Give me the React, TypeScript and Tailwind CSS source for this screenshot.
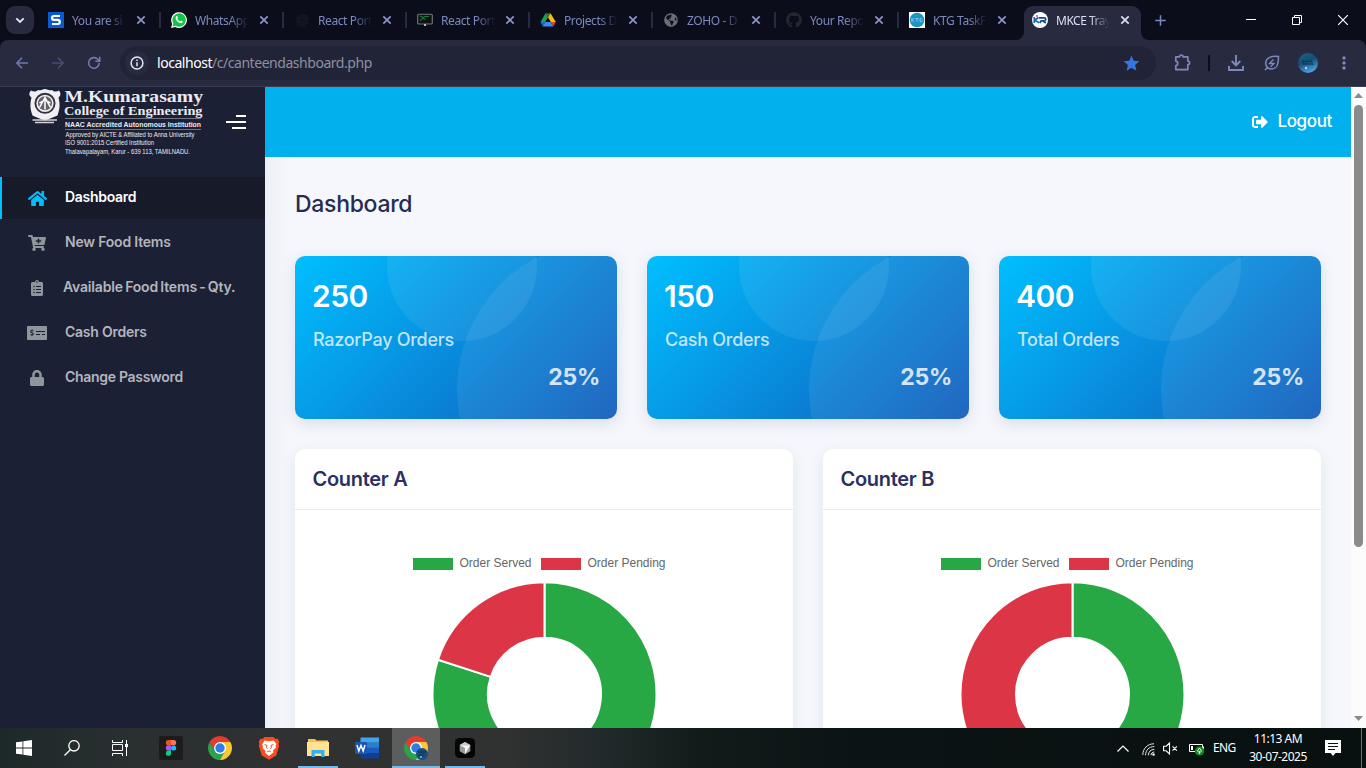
import React from "react";
import {
  FaHome,
  FaCartPlus,
  FaClipboardList,
  FaMoneyCheckAlt,
  FaLock,
  FaSignOutAlt,
  FaGithub,
  FaGlobeAmericas,
} from "react-icons/fa";
import { MdStar, MdMoreVert } from "react-icons/md";
import { RiOpenaiFill } from "react-icons/ri";

/* ---------- Favicons ---------- */

function SIcon() {
  return (
    <svg width="16" height="16" viewBox="0 0 16 16">
      <rect width="16" height="16" fill="#0a5bd0" />
      <path d="M12 4H6.2C4.8 4 4 4.8 4 5.9s.8 1.9 2 1.9h3.8c1.2 0 2 .8 2 2S11 12 9.8 12H4" fill="none" stroke="#fff" strokeWidth="2.2" />
    </svg>
  );
}

function WhatsIcon() {
  return (
    <svg width="16" height="16" viewBox="0 0 16 16">
      <path d="M0 16l1.1-4.1A7.9 7.9 0 1 1 4.2 15z" fill="#fff" />
      <path d="M1.5 14.5l.9-3A6.7 6.7 0 1 1 4.6 13.7z" fill="#13c34a" />
      <path d="M5.3 4.2c.5-.4.9-.2 1.1.3l.5 1.1c.1.4-.6.9-.6 1.1.5 1.200 1.600 2.200 2.800 2.600.3 0 .8-.9 1.100-.8l1.400.7c.5.3 0 1.500-.9 1.800-2.200.700-5.900-2.300-6.100-4.800 0-.9.300-1.600.7-2z" fill="#fff" />
    </svg>
  );
}

function MonitorIcon() {
  return (
    <svg width="16" height="16" viewBox="0 0 16 16">
      <rect x="0.7" y="2.200" width="14.600" height="9.800" rx="1" fill="#101312" stroke="#777" strokeWidth="1.100" />
      <path d="M3 4l3 1.500L3 9M5 6.500l3-2h4M6 7h3" stroke="#1d7a3d" strokeWidth="1.100" fill="none" />
      <rect x="7" y="12" width="2" height="2" fill="#bbb" />
    </svg>
  );
}

function DriveIcon() {
  return (
    <svg width="16" height="16" viewBox="0 0 16 16">
      <path d="M5.500 1.200L0.500 10l2.300 3.800L8 5.200z" fill="#1ca24c" />
      <path d="M5.500 1.200h5L8 5.500z" fill="#188038" />
      <path d="M10.500 1.200L8 5.300 10.800 10h5z" fill="#fbbc04" />
      <path d="M5.200 10h5.600l2.600 4.500H2.700z" fill="#4285f4" />
      <path d="M10.800 10h4.900l-2.400 4.300z" fill="#ea4335" />
      <path d="M5.200 10H.5l2.400 4.200z" fill="#1967d2" />
    </svg>
  );
}

function KtgIcon() {
  return (
    <svg width="16" height="16" viewBox="0 0 16 16">
      <rect width="16" height="16" fill="#fff" />
      <circle cx="8" cy="8" r="7.300" fill="#1f93c4" />
      <path d="M2.800 6.200v3.600M5.300 6.200L3.200 8l2.100 1.800M6.200 6.600h3.600M8 6.600v3.200M13.200 6.800h-2.200v2.800h2.200v-1.300" fill="none" stroke="#8fd6ee" strokeWidth="0.800" />
    </svg>
  );
}

function KrIcon() {
  return (
    <svg width="16" height="16" viewBox="0 0 16 16">
      <circle cx="8" cy="8" r="8" fill="#fff" />
      <path d="M2.300 5v6M6.500 5.500L2.800 8.200l4.400 2.500" fill="none" stroke="#1a6db5" strokeWidth="1.800" />
      <path d="M7 5.900h5.300c1.900 0 1.900 3 0 3H9.200L7.800 11M11.200 9l2.600 2.200" fill="none" stroke="#1a4b86" strokeWidth="1.700" />
      <circle cx="5" cy="4" r="1" fill="#e0484a" />
    </svg>
  );
}

function Close({ color }: { color: string }) {
  return (
    <svg width="10" height="10" viewBox="0 0 10 10">
      <path d="M1.300 1.300l7.400 7.400M8.700 1.300L1.300 8.700" stroke={color} strokeWidth="1.700" />
    </svg>
  );
}

const tabs = [
  { title: "You are si", icon: <SIcon /> },
  { title: "WhatsApp", icon: <WhatsIcon /> },
  { title: "React Port", icon: <RiOpenaiFill size={15} color="#1c1e26" /> },
  { title: "React Port", icon: <MonitorIcon /> },
  { title: "Projects D", icon: <DriveIcon /> },
  { title: "ZOHO - D", icon: <FaGlobeAmericas size={14} color="#6b6e73" /> },
  { title: "Your Repo", icon: <FaGithub size={16} color="#24292e" /> },
  { title: "KTG TaskF", icon: <KtgIcon /> },
];

const fade = "[mask-image:linear-gradient(to_right,#000_65%,transparent_100%)]";

function TabStrip() {
  return (
    <div className="flex h-10 bg-[#0b0d1b]">
      <div className="w-[37px] shrink-0 pl-1.5 pt-1.5">
        <div className="flex size-7 items-center justify-center rounded-[9px] bg-[#282b40]">
          <svg width="10" height="7" viewBox="0 0 10 7">
            <path d="M1.300 1.300L5 5l3.700-3.700" fill="none" stroke="#e3e5f5" strokeWidth="1.900" />
          </svg>
        </div>
      </div>
      {tabs.map((t, i) => (
        <div key={i} className="flex w-[123px] shrink-0 items-center pl-[11px]">
          <div className="flex size-4 shrink-0 items-center justify-center">{t.icon}</div>
          <div className={`ml-2 mt-px w-[54px] whitespace-nowrap text-[12px] tracking-[-0.4px] text-[#7f88bd] ${fade}`}>{t.title}</div>
          <div className="ml-[10px] flex">
            <Close color="#8d95c8" />
          </div>
          {i < 7 && <div className="-mr-px ml-auto h-4 w-0.5 bg-[#282b40]" />}
        </div>
      ))}
      <div className="flex w-[123px] shrink-0 flex-col justify-end">
        <div className="flex h-[34px] items-end">
          <svg width="8" height="8" viewBox="0 0 8 8" className="-ml-[5px] shrink-0">
            <path d="M8 0v8H0a8 8 0 0 0 8-8z" fill="#282b40" />
          </svg>
          <div className="flex h-[34px] w-[117px] shrink-0 items-center rounded-t-[9px] bg-[#282b40] pb-1.5 pl-2">
            <KrIcon />
            <div className={`ml-2 mt-px w-[53px] whitespace-nowrap text-[12px] tracking-[-0.5px] text-[#dcdffa] ${fade}`}>MKCE Tray</div>
            <div className="ml-[11px] flex">
              <Close color="#dcdffa" />
            </div>
          </div>
          <svg width="8" height="8" viewBox="0 0 8 8" className="shrink-0">
            <path d="M0 0v8h8a8 8 0 0 1-8-8z" fill="#282b40" />
          </svg>
        </div>
      </div>
      <div className="flex items-center pl-[11px]">
        <svg width="11" height="11" viewBox="0 0 11 11">
          <path d="M5.500 0.300v10.400M.3 5.500h10.400" stroke="#7f88bd" strokeWidth="1.500" />
        </svg>
      </div>
      <div className="ml-auto flex items-center gap-9 pr-[18px]">
        <svg width="10" height="10" viewBox="0 0 10 10">
          <path d="M0 4.500h10" stroke="#fff" />
        </svg>
        <svg width="10" height="10" viewBox="0 0 10 10" fill="none" stroke="#fff">
          <path d="M.5 2.500h7v7h-7zM2.500 2.500v-2h7v7h-2" />
        </svg>
        <svg width="10" height="10" viewBox="0 0 10 10">
          <path d="M0 0l10 10M10 0L0 10" stroke="#fff" strokeWidth="1.200" />
        </svg>
      </div>
    </div>
  );
}

function Toolbar() {
  return (
    <div className="bg-[#0b0d1b]">
      <div className="flex h-[47px] items-center rounded-t-lg border-b border-[#3b3e57] bg-[#282b40] pl-4">
        <svg width="12" height="12" viewBox="0 0 12 12" fill="none" stroke="#7079b0" strokeWidth="1.600">
          <path d="M12 6H1M6 .8L.9 6 6 11.200" />
        </svg>
        <svg width="12" height="12" viewBox="0 0 12 12" fill="none" stroke="#474c70" strokeWidth="1.600" className="ml-6">
          <path d="M0 6h11M6 .8L11.100 6 6 11.200" />
        </svg>
        <svg width="14" height="14" viewBox="0 0 14 14" fill="none" stroke="#7079b0" strokeWidth="1.600" className="ml-[23px]">
          <path d="M12.200 7A5.300 5.300 0 1 1 10.800 3.300L12.500 5M12.700 .8v4.400H8.300" />
        </svg>
        <div className="ml-[19px] flex h-[34px] w-[1036px] items-center rounded-full bg-[#212437] pl-[5px]">
          <div className="flex size-6 items-center justify-center rounded-full bg-[#282b40]">
            <svg width="14" height="14" viewBox="0 0 14 14" fill="none" stroke="#e3e5f5" strokeWidth="1.500">
              <circle cx="7" cy="7" r="5.900" />
              <path d="M7 6.300v4M7 3.600v1.500" />
            </svg>
          </div>
          <div className="ml-2 whitespace-nowrap pb-px text-[14px] tracking-[-0.46px] text-[#8d8f9f]">
            <span className="text-white">localhost</span>/c/canteendashboard.php
          </div>
          <MdStar size={19} color="#3574e2" className="ml-auto mr-[15px]" />
        </div>
        <svg width="17" height="17" viewBox="0 0 17 17" fill="none" stroke="#7f88bd" strokeWidth="1.700" className="-mt-px ml-[18px]">
          <path d="M1.800 2.800H5.600C5.600.4 9 .4 9 2.800h4.800V7c2.400 0 2.400 3.600 0 3.600v5H1.800v-4c2.600-.4 2.600-4 0-4.400z" strokeLinejoin="round" />
        </svg>
        <div className="ml-[17px] h-4 w-0.5 bg-[#0b0d1b]" />
        <svg width="16" height="16" viewBox="0 0 16 16" fill="none" stroke="#7f88bd" strokeWidth="1.900" className="ml-[18px]">
          <path d="M8 0v10M3.700 6L8 10.300 12.300 6M1 11v4h14v-4" />
        </svg>
        <svg width="16" height="16" viewBox="0 0 16 16" fill="none" stroke="#7f88bd" strokeWidth="1.500" className="ml-5">
          <path d="M14.500 1.500C8 .8 1.700 2.300 1.700 8.300c0 8 11 7 12.100.2.500-2.700.7-5 .7-7zM3.500 12.500L1 15" />
          <path d="M9.500 4.500L5.500 8.500h4.500L6.500 12" strokeWidth="1.300" />
        </svg>
        <svg width="20" height="20" viewBox="0 0 20 20" className="ml-[18px]">
          <defs>
            <linearGradient id="avatar" x1="0" y1="0" x2="0.4" y2="1">
              <stop offset="0" stopColor="#126b94" />
              <stop offset="0.500" stopColor="#164c72" />
              <stop offset="1" stopColor="#4a9bdc" />
            </linearGradient>
          </defs>
          <circle cx="10" cy="10" r="10" fill="url(#avatar)" />
          <path d="M4 8.500h11M5 11h11" stroke="#0e3049" strokeWidth="1.400" strokeDasharray="2 .7" />
          <circle cx="8" cy="15" r="1.200" fill="#a9d4f5" />
        </svg>
        <MdMoreVert size={20} color="#7f88bd" className="ml-4" />
      </div>
    </div>
  );
}

/* ---------- Sidebar ---------- */

function CollegeLogo() {
  return (
    <svg width="176" height="70" viewBox="28 87 176 70" className="shrink-0">
      <path d="M31 90.500c3 2 5 1 7-.5 4 1 4-1 7-1s3 2 7 1c2 1.500 4 2.500 7 .5 2 3 2 5-.5 7 2 8 1 12-1 18-4 2-8 3-12.500 5-5-2-9-3-12.500-5-2-6-3-10-1-18-2.500-2-3-4-.5-7z" fill="#f1eff2" />
      <circle cx="45" cy="103.300" r="9.600" fill="none" stroke="#332f40" strokeWidth="1.900" />
      <circle cx="45" cy="103.300" r="7" fill="#66616d" />
      <path d="M39.500 107.500l5.500-10 5.500 10M45 96.500v13M39.500 103l4-2M50.500 103l-4-2" stroke="#fff" strokeWidth="1.500" fill="none" />
      <path d="M32.500 120h24.500M35 122.500h19" stroke="#d6d4da" strokeWidth="1.700" />
      <g fill="#eceaf0">
        <g fontFamily="'Liberation Serif',serif" fontWeight="bold">
          <text x="64.500" y="102" fontSize="17.500" textLength="138.500" lengthAdjust="spacingAndGlyphs">M.Kumarasamy</text>
          <text x="64" y="114.800" fontSize="13.500" textLength="138.500" lengthAdjust="spacingAndGlyphs">College of Engineering</text>
        </g>
        <path d="M65 118.500h136M65 129.500h136" stroke="#8a8896" strokeWidth="0.800" />
        <g fontFamily="'Liberation Sans',sans-serif">
          <text x="65" y="126.600" fontSize="6.500" fontWeight="bold" textLength="136" lengthAdjust="spacingAndGlyphs">NAAC Accredited Autonomous Institution</text>
          <text x="65.500" y="137" fontSize="6.500" textLength="129" lengthAdjust="spacingAndGlyphs">Approved by AICTE &amp; Affiliated to Anna University</text>
          <text x="65" y="145.300" fontSize="6.500" textLength="89" lengthAdjust="spacingAndGlyphs">ISO 9001:2015 Certified Institution</text>
          <text x="65" y="153.800" fontSize="6.500" textLength="125" lengthAdjust="spacingAndGlyphs">Thalavapalayam, Karur - 639 113, TAMILNADU.</text>
        </g>
      </g>
    </svg>
  );
}

const navItems = [
  { label: "New Food Items", icon: <FaCartPlus size={18} />, cls: "pl-2 tracking-[-0.2px]" },
  { label: "Available Food Items - Qty.", icon: <FaClipboardList size={16} />, cls: "pl-1.5 tracking-[-0.17px] [word-spacing:-1.1px]" },
  { label: "Cash Orders", icon: <FaMoneyCheckAlt size={20} />, cls: "pl-2 tracking-[-0.25px]" },
  { label: "Change Password", icon: <FaLock size={16} />, cls: "pl-2 tracking-[-0.3px]" },
];

function Sidebar() {
  return (
    <aside className="flex h-full w-[265px] shrink-0 flex-col bg-[#1c2035]">
      <div className="flex h-[90px] shrink-0 items-start pl-7">
        <CollegeLogo />
        <svg width="20" height="14" viewBox="0 0 20 14" className="ml-[22px] mt-7" fill="#fff">
          <rect x="10" y="0" width="10" height="2" />
          <rect x="0" y="6" width="20" height="2" />
          <rect x="6" y="12" width="14" height="2" />
        </svg>
      </div>
      <nav className="flex flex-col gap-[3px] font-['Inter',sans-serif] text-[14px] font-semibold text-[#b4b5bb]">
        <div className="flex h-[42px] items-center border-l-2 border-[#00bfff] bg-[#161a29] text-white">
          <div className="flex w-[55px] justify-end text-[#00bfff]">
            <div className="mr-[10px]"><FaHome size={19} /></div>
          </div>
          <span className="pb-[3px] pl-2 tracking-[-0.3px]">Dashboard</span>
        </div>
        {navItems.map((n) => (
          <div key={n.label} className="flex h-[42px] items-center">
            <div className="flex w-[57px] shrink-0 items-center pl-[17px] text-[#8e959b]">
              <div className="flex w-10 justify-center">{n.icon}</div>
            </div>
            <span className={`whitespace-nowrap pb-[3px] ${n.cls}`}>{n.label}</span>
          </div>
        ))}
      </nav>
    </aside>
  );
}

/* ---------- Content ---------- */

function StatCard({ value, label }: { value: string; label: string }) {
  return (
    <div className="relative h-[163px] overflow-hidden rounded-[10px] bg-[linear-gradient(135deg,#00bfff_0%,#105bbb_100%)] px-[17px] pt-[17px] font-['Inter',sans-serif] text-white">
      <div className="absolute -top-[65px] left-[92px] size-[150px] rounded-full bg-white/[0.07]" />
      <div className="absolute -top-[16px] left-[162px] size-[300px] rounded-full bg-white/[0.07]" />
      <div className="relative text-[30px] font-semibold leading-[46px] tracking-[-0.5px]">{value}</div>
      <div className="relative mt-[6px] pl-px text-[18px] font-medium leading-[30px] tracking-[-0.28px] text-white/75">{label}</div>
      <div className="relative mt-[6px] text-right text-[23px] font-bold leading-[32px] tracking-[-0.3px] text-white/80">25%</div>
    </div>
  );
}

function slice(from: number, to: number) {
  const p = (r: number, a: number) => `${112 + r * Math.sin(a * 2 * Math.PI)} ${112 - r * Math.cos(a * 2 * Math.PI)}`;
  const large = to - from > 0.5 ? 1 : 0;
  return `M${p(112, from)}A112 112 0 ${large} 1 ${p(112, to)}L${p(56.500, to)}A56.5 56.5 0 ${large} 0 ${p(56.500, from)}Z`;
}

function CounterCard({ title, served }: { title: string; served: number }) {
  return (
    <div className="h-[420px] rounded-[10px] bg-white shadow-[0_4px_16px_rgba(40,50,90,0.09)]">
      <div className="flex h-[61px] items-center border-b border-[#e9eaed] px-[17.500px] font-['Inter',sans-serif] text-[20px] font-semibold tracking-[-0.3px] text-[#2b3060]">{title}</div>
      <div className="flex flex-col items-center pt-[46px] font-['Liberation_Sans',Arial,sans-serif] text-[12px] leading-3 text-[#666]">
        <div className="mr-[9.500px] flex items-center">
          <div className="mt-0.5 h-3 w-10 bg-[#28a745]" />
          <span className="ml-[6.500px] w-[72px] whitespace-nowrap">Order Served</span>
          <div className="ml-[9.500px] mt-0.5 h-3 w-10 bg-[#dc3545]" />
          <span className="ml-[6.500px] w-[78px] whitespace-nowrap">Order Pending</span>
        </div>
        <svg width="224" height="224" viewBox="0 0 224 224" className="mt-3 overflow-visible">
          <g transform="translate(0.5 0.3)" stroke="#fff" strokeWidth="2">
            <path d={slice(0, served)} fill="#28a745" />
            <path d={slice(served, 1)} fill="#dc3545" />
          </g>
        </svg>
      </div>
    </div>
  );
}

function Content() {
  return (
    <div className="flex min-w-0 flex-1 flex-col bg-[#f5f7fc]">
      <header className="flex h-[70px] shrink-0 items-center justify-end bg-[#02b0ed] pr-[19px] font-['Inter',sans-serif] text-[17px] font-medium tracking-[-0.35px] text-white">
        <FaSignOutAlt size={16} className="mr-[9px]" />
        <span>Logout</span>
      </header>
      <main className="bg-[linear-gradient(to_right,#edf0f7_0,#f5f7fc_26px)] px-[30px] pt-[29px]">
        <h1 className="h-[70px] font-['Inter',sans-serif] text-[23px] font-medium leading-9 tracking-[-0.3px] text-[#262b52]">Dashboard</h1>
        <div className="grid grid-cols-3 gap-[30px]">
          {[["250", "RazorPay Orders"], ["150", "Cash Orders"], ["400", "Total Orders"]].map(([v, l]) => (
            <div key={l} className="rounded-[10px] shadow-[0_4px_16px_rgba(40,50,90,0.13)]">
              <StatCard value={v} label={l} />
            </div>
          ))}
        </div>
        <div className="mt-[30px] grid grid-cols-2 gap-[30px]">
          <CounterCard title="Counter A" served={0.8} />
          <CounterCard title="Counter B" served={0.5} />
        </div>
      </main>
    </div>
  );
}

function Scrollbar() {
  return (
    <div className="flex w-[15px] shrink-0 flex-col items-center bg-[#fcfcfc]">
      <svg width="9" height="5" viewBox="0 0 9 5" className="mt-1.5"><path d="M0 5L4.500 0 9 5z" fill="#8b8b8b" /></svg>
      <div className="mt-[7px] h-[442px] w-[9px] rounded-full bg-[#8b8b8b]" />
      <svg width="9" height="5" viewBox="0 0 9 5" className="mb-[7px] mt-auto"><path d="M0 0l4.500 5L9 0z" fill="#8b8b8b" /></svg>
    </div>
  );
}

/* ---------- Taskbar ---------- */

function Chrome({ badge }: { badge?: boolean }) {
  return (
    <svg width="24" height="24" viewBox="0 0 24 24">
      <path d="M12 12L22.390 6A12 12 0 0 1 12 24z" fill="#fcc934" />
      <path d="M12 6h10.390L17.200 15 12 24z" fill="#fcc934" />
      <path d="M1.610 6L6.800 15l5.200 3 5.200-3L12 24A12 12 0 0 1 1.610 6z" fill="#2ba24c" />
      <path d="M1.610 6A12 12 0 0 1 22.390 6H12a6 6 0 0 0-5.500 8.500z" fill="#e33b2e" />
      <circle cx="12" cy="12" r="6" fill="#fff" />
      <circle cx="12" cy="12" r="4.700" fill="#2f7de9" />
      {badge && (
        <>
          <circle cx="18" cy="18" r="6" fill="#174f7c" />
          <path d="M14 16h8M14.500 19h6" stroke="#0d3555" strokeWidth="1.200" />
          <circle cx="17" cy="21" r="1" fill="#7cc1ea" />
        </>
      )}
    </svg>
  );
}

const apps = [
  {
    icon: (
      <svg width="24" height="24" viewBox="0 0 24 24">
        <rect width="24" height="24" rx="2" fill="#1d1c1d" />
        <path d="M12 4H9.500a2.600 2.600 0 0 0 0 5.300H12z" fill="#f24e1e" />
        <path d="M12 4h2.500a2.600 2.600 0 0 1 0 5.300H12z" fill="#ff7262" />
        <path d="M12 9.300H9.500a2.600 2.600 0 0 0 0 5.300H12z" fill="#a259ff" />
        <circle cx="14.600" cy="12" r="2.600" fill="#1abcfe" />
        <path d="M12 14.600H9.500a2.600 2.600 0 1 0 2.500 2.600z" fill="#0acf83" />
      </svg>
    ),
    cls: "",
    line: "",
  },
  { icon: <Chrome />, cls: "", line: "" },
  {
    icon: (
      <svg width="22" height="24" viewBox="0 0 22 24">
        <path d="M6.500 1h9l2 2 2-.5L21.300 6l-.7 2 .6 2-3 9.500L11 23.800 3.800 19.500.8 10l.6-2-.7-2 1.800-3.500 2 .5z" fill="#fb4b20" />
        <path d="M6.500 4.500l4.500.8 4.500-.8 3 3.500-1 1.500.5 2-3 3 .5 1.700L11 20l-4-3.300.5-1.700-3-3 .5-2-1-1.500z" fill="#fff" />
        <path d="M6.500 8.500l2.500.9-.5 2.100 1 1.300M15.500 8.500l-2.500.9.5 2.100-1 1.300M9 16l2-1.100 2 1.100" fill="none" stroke="#fb4b20" strokeWidth="1" />
      </svg>
    ),
    cls: "",
    line: "",
  },
  {
    icon: (
      <svg width="22" height="20" viewBox="0 0 22 20">
        <path d="M1 1h7l1.500 1.500H21V18H1z" fill="#f3c54b" />
        <path d="M0 4h22v14H0z" fill="#ffe391" />
        <path d="M4.500 19v-7h13v7h-3.300v-3.500H7.800V19z" fill="#35b0ea" />
      </svg>
    ),
    cls: "",
    line: "w-10 bg-[#76b9ed]",
  },
  {
    icon: (
      <svg width="24" height="22" viewBox="0 0 24 22">
        <path d="M5.500 1.500A1 1 0 0 1 6.500.5H24v5.200H5.500z" fill="#41a5ee" />
        <path d="M5.500 5.700H24v5.200H5.500z" fill="#2b7cd3" />
        <path d="M5.500 10.900H24v5.200H5.500z" fill="#185abd" />
        <path d="M5.500 16.100H24v5.400H6.500a1 1 0 0 1-1-1z" fill="#103f91" />
        <rect x="0" y="5" width="12" height="12" rx="1" fill="#1856b5" />
        <path d="M2 8l1.800 6L6 8.500 8.200 14 10 8" fill="none" stroke="#fff" strokeWidth="1.500" />
      </svg>
    ),
    cls: "",
    line: "",
  },
  { icon: <Chrome badge />, cls: "bg-[#5b5d5e]", line: "w-12 bg-[#76b9ed]" },
  {
    icon: (
      <svg width="20" height="20" viewBox="0 0 20 20">
        <rect width="20" height="20" rx="4.500" fill="#050505" />
        <path d="M10 4l5.300 3v6.200L10 16.200l-5.300-3V7z" fill="#9a9a9a" />
        <path d="M4.700 7L10 4l5.300 3z" fill="#c9c9c9" />
        <path d="M5 7.200h10.300L10 16.200V10z" fill="#f5f5f5" />
      </svg>
    ),
    cls: "",
    line: "w-10 bg-[#76b9ed]",
  },
];

function Taskbar() {
  return (
    <div className="flex h-10 shrink-0 bg-[linear-gradient(to_right,#1d2929_0px,#2a2f30_130px,#303132_300px,#303131_510px,#222a2b_600px,#121b1a_700px,#0b1314_860px,#081010_1366px)]">
      <div className="flex w-12 items-center justify-center">
        <svg width="16" height="16" viewBox="0 0 16 16" fill="#fff">
          <path d="M0 2.300L6.500 1.400v6.100H0zM7.300 1.300L16 0v7.500H7.300zM0 8.400h6.500v6.200L0 13.700zM7.300 8.400H16V16l-8.700-1.200z" />
        </svg>
      </div>
      <div className="flex w-12 items-center justify-center">
        <svg width="16" height="16" viewBox="0 0 16 16" fill="none" stroke="#fff" strokeWidth="1.300">
          <circle cx="10" cy="5.800" r="5.200" />
          <path d="M6.300 9.700L.5 15.500" />
        </svg>
      </div>
      <div className="flex w-12 items-center justify-center">
        <svg width="16" height="16" viewBox="0 0 16 16" fill="none" stroke="#fff" strokeWidth="1">
          <path d="M.5 0v2.500h10V0M.5 4.500h10v6H.5zM.5 16v-2.500h10V16M14.500 0v16" />
          <rect x="13" y="4" width="3" height="3" fill="#fff" stroke="none" />
        </svg>
      </div>
      <div className="ml-[3px] flex gap-px">
        {apps.map((a, i) => (
          <div key={i} className={`flex w-12 flex-col items-center ${a.cls}`}>
            <div className="flex h-[38px] items-center pt-0.5">{a.icon}</div>
            <div className={`h-0.5 ${a.line}`} />
          </div>
        ))}
      </div>
      <div className="ml-auto flex items-center text-[12px] text-white">
        <svg width="12" height="7" viewBox="0 0 12 7" fill="none" stroke="#fff" strokeWidth="1.200"><path d="M.5 6.500L6 1l5.500 5.500" /></svg>
        <svg width="13" height="13" viewBox="0 0 13 13" fill="none" stroke="#e8e8e8" strokeWidth="1" className="ml-[13px] mt-0.5">
          <path d="M.8 12C.8 5.500 5.500.8 12 .8M3.600 12.300C3.600 7 7 3.600 12.300 3.600M6.400 12.300c0-3.600 2.300-5.900 5.900-5.900M9 12.300c0-2 1.300-3.300 3.300-3.300" />
          <circle cx="11.500" cy="11.500" r="1.300" fill="#fff" stroke="none" />
        </svg>
        <svg width="15" height="13" viewBox="0 0 15 13" fill="none" stroke="#fff" strokeWidth="1.100" className="ml-2">
          <path d="M.6 4.200h2.600L6.500 1v11L3.200 8.800H.6zM9.500 4.300l4.400 4.400M13.900 4.300L9.500 8.700" />
        </svg>
        <svg width="17" height="15" viewBox="0 0 17 15" className="ml-[10px]">
          <path d="M1.500 3.500h13v7h-13zM15.500 5.500v3" fill="none" stroke="#fff" strokeWidth="1" />
          <rect x="3" y="5" width="2" height="4" fill="#fff" />
          <circle cx="11.500" cy="10" r="4.700" fill="#118a1c" />
          <path d="M11.500 7l2 3-2 2-2-2zM11.500 10v3" stroke="#fff" strokeWidth="0.900" fill="none" />
        </svg>
        <span className="ml-[8px] w-[24px] tracking-[-0.6px]">ENG</span>
        <div className="ml-[10px] flex w-[62px] flex-col items-center whitespace-nowrap leading-[18px] tracking-[-0.5px]">
          <span>11:13 AM</span>
          <span>30-07-2025</span>
        </div>
        <svg width="16" height="16" viewBox="0 0 16 16" className="ml-4">
          <path d="M0 0h16v13h-5.500L8 16l-2.500-3H0z" fill="#fff" />
          <path d="M3 3.500h10M3 6.500h10M3 9.500h7" stroke="#0a1213" />
        </svg>
        <div className="ml-5 h-10 w-px bg-[#6c7071]" />
        <div className="w-[4px]" />
      </div>
    </div>
  );
}

export default function App() {
  return (
    <div className="flex h-[768px] w-[1366px] flex-col overflow-hidden font-['Noto_Sans',sans-serif]">
      <TabStrip />
      <Toolbar />
      <div className="flex h-[641px] shrink-0 overflow-hidden">
        <Sidebar />
        <Content />
        <Scrollbar />
      </div>
      <Taskbar />
    </div>
  );
}
